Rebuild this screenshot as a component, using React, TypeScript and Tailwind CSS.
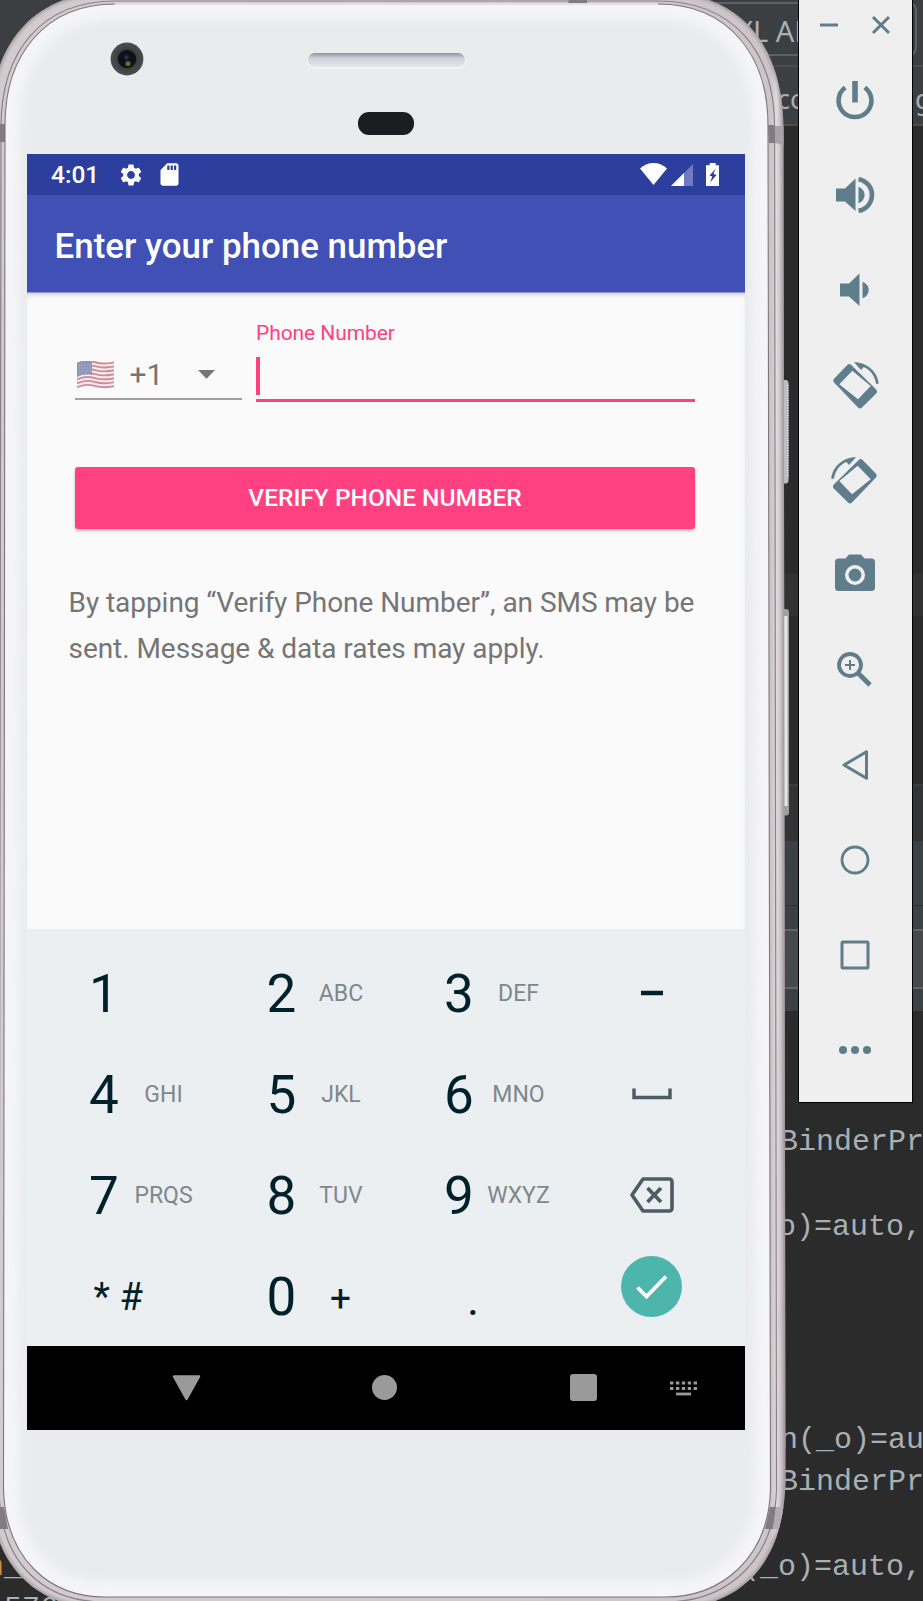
import type { ReactNode } from "react";
import { MdSdCard, MdSettings } from "react-icons/md";

function Editor() {
  return (
    <div className="flex h-[1601px] flex-col overflow-hidden bg-[#2b2b2b] font-['Liberation_Mono',monospace] text-[30px] leading-[42.5px] whitespace-pre text-[#a9b0b4]">
      <div className="flex h-[65px] shrink-0 bg-[#3c3f41] py-[2px] pl-[300px]">
        <div className="h-[54px] w-[617px] rounded-lg border-2 border-[#5e6162] pl-[434px] font-['Noto_Sans',sans-serif] text-[29px] leading-[54px]">
          XL API
        </div>
      </div>
      <div className="flex h-[61px] shrink-0 justify-between border-y-2 border-[#4b4d4f] bg-[#3c3f41] pl-[777px] font-['Noto_Sans',sans-serif] text-[27px] leading-[63px]">
        <span>co</span>
        <span className="w-[8px]">g</span>
      </div>
      <div className="h-[448px] shrink-0" />
      <div className="h-[42px] shrink-0 bg-[#323232]" />
      <div className="h-[168px] shrink-0" />
      <div className="h-[59px] shrink-0 border-y-2 border-t-[#3a3b3c] border-b-[#3d3f41] bg-[#313335]" />
      <div className="h-[63px] shrink-0 border-b border-[#2e3133] bg-[#3b4045]" />
      <div className="h-[23px] shrink-0 bg-[#3b4045]" />
      <div className="h-[60px] shrink-0 border-y-2 border-[#646464] bg-[#45494a]" />
      <div className="h-[22px] shrink-0 bg-[#3b4045]" />
      <div className="h-[109.500px] shrink-0" />
      <div className="h-[85px] shrink-0 pl-[780px]">BinderPr</div>
      <div className="h-[213px] shrink-0 pl-[742px]">(_o)=auto,</div>
      <div className="h-[42px] shrink-0 pl-[780px]">n(_o)=au</div>
      <div className="h-[85px] shrink-0 pl-[780px]">BinderPr</div>
      <div className="flex h-[42px] shrink-0">
        <div className="-ml-[14px] w-[756px]">
          <span className="text-[#cc8f42]">n</span>_
        </div>
        <div>(_o)=auto,</div>
      </div>
      <div className="shrink-0 pl-[4px]">576(</div>
    </div>
  );
}

function Shell() {
  const outer =
    "M-10.5 130C-10.5 50 28 -8 113 -8H660C745 -8 783.5 50 783.5 130L785.5 1480C784 1568 738 1610 660 1610H114C36 1610 -10 1568 -11.5 1480Z";
  const inner =
    "M5 125C5 55 45 4 115 4H658C728 4 768 55 768 125L770.5 1490C768 1560 720 1597 665 1597H105C50 1597 6 1560 3.5 1490Z";
  return (
    <svg className="absolute inset-0" width="800" height="1601" viewBox="0 0 800 1601" fill="none">
      <defs>
        <linearGradient id="rim" x1="-10" x2="786" y1="0" y2="0" gradientUnits="userSpaceOnUse">
          <stop offset="0" stopColor="#a89fa3" />
          <stop offset="0.013" stopColor="#d3cccf" />
          <stop offset="0.3" stopColor="#d3cbce" />
          <stop offset="0.982" stopColor="#cdc5c8" />
          <stop offset="0.988" stopColor="#e2dbde" />
          <stop offset="1" stopColor="#b5acb0" />
        </linearGradient>
        <linearGradient id="mesh" x1="0" x2="0" y1="0" y2="1">
          <stop offset="0" stopColor="#8f929b" />
          <stop offset="0.35" stopColor="#cccfd5" />
          <stop offset="1" stopColor="#e7e8ec" />
        </linearGradient>
        <radialGradient id="lens">
          <stop offset="0" stopColor="#101114" />
          <stop offset="0.5" stopColor="#17181b" />
          <stop offset="0.6" stopColor="#3d3f42" />
          <stop offset="1" stopColor="#4b4d50" />
        </radialGradient>
        <filter id="soft" x="-5%" y="-5%" width="110%" height="110%">
          <feGaussianBlur stdDeviation="5" />
        </filter>
        <filter id="edge" x="-5%" y="-5%" width="110%" height="110%">
          <feGaussianBlur stdDeviation="1.5" />
        </filter>
        <clipPath id="face">
          <path d={inner} />
        </clipPath>
        <clipPath id="body">
          <path d={outer} />
        </clipPath>
      </defs>
      <rect x="779" y="380" width="9.5" height="103.5" rx="3" fill="#b9bfbf" />
      <path d="M788 385V478" stroke="#e4e8e8" strokeWidth="1.5" strokeDasharray="1 1.5" />
      <rect x="779" y="609" width="10" height="206.5" rx="3" fill="#9c9f9b" />
      <path d="M785.5 616V806" stroke="#e4e8e2" strokeWidth="4" />
      <path d={outer} fill="url(#rim)" />
      <g clipPath="url(#body)">
        <path d={outer} stroke="#8b8186" strokeWidth="4" strokeOpacity="0.6" filter="url(#edge)" />
        <path
          d="M1 127C1 52 41 1 115 1H658C734 1 774.5 52 774.5 127L776.5 1490C774 1564 724 1602 665 1602H105C44 1602 0 1564 -1 1490Z"
          stroke="#8b8287"
          strokeWidth="1.2"
        />
        <path d="M-2 124H5V142H-2Z" fill="#827b7f" />
        <path d="M768 125H775V143H769Z" fill="#827b7f" />
        <path d="M775 126H784V145L775 143Z" fill="#aaa2a6" />
        <path d="M568.5 0H587V3H568.5Z" fill="#827b7f" />
        <path d="M-2 1507H4L8 1529H-2Z" fill="#827b7f" />
        <path d="M770 1507H776L773 1529H765Z" fill="#827b7f" />
        <path d="M776 1507H786L781 1529H773Z" fill="#b3abaf" />
      </g>
      <path d={inner} fill="#eaebed" />
      <g clipPath="url(#face)">
        <path d={inner} stroke="#f5f5f7" strokeWidth="30" filter="url(#soft)" />
      </g>
      <path d={inner} stroke="#7c7579" strokeWidth="1.1" />
      <path d="M115 4H658" stroke="#e4e0e2" strokeWidth="2" />
      <circle cx="127" cy="59" r="16.4" fill="url(#lens)" />
      <circle cx="127" cy="59" r="9" fill="#101115" />
      <circle cx="126.5" cy="57.5" r="2.2" fill="#2c2b58" />
      <circle cx="128" cy="63.5" r="2.6" fill="#6b6728" />
      <rect x="307" y="54" width="159" height="15" rx="7.5" fill="#f3f3f5" />
      <rect x="308" y="53" width="157" height="14" rx="7" fill="url(#mesh)" />
      <rect x="358" y="112" width="56" height="23" rx="11" fill="#1c1d21" />
    </svg>
  );
}

function StatusBar() {
  return (
    <div className="flex h-[41px] items-center bg-[#2c3e9e] text-white">
      <span className="ml-[24px] w-[67px] pt-[2px] text-[24.500px] font-medium">4:01</span>
      <MdSettings size={26} />
      <MdSdCard className="ml-[12px]" size={27} />
      <svg className="mb-[2px] ml-auto" width="27" height="22" viewBox="0 0 27 22">
        <path d="M13.500 22L0 5.500C3.500 2 8.500 0 13.500 0S23.500 2 27 5.500Z" fill="currentColor" />
      </svg>
      <svg className="ml-[3.500px]" width="22" height="22" viewBox="0 0 22 22">
        <path d="M22 0V22H0Z" fill="#6f7abf" />
        <path d="M13 9V22H0Z" fill="currentColor" />
      </svg>
      <svg className="mr-[26px] ml-[13px]" width="13.500" height="23" viewBox="0 0 13.500 23">
        <path
          fillRule="evenodd"
          d="M3.700 0H9.700V2.300H13.500V23H0V2.300H3.700ZM9.500 6L3.500 12.500L6.300 13.500L4 19.500L10.500 12L7.500 11Z"
          fill="currentColor"
        />
      </svg>
    </div>
  );
}

function Flag() {
  const stripes = [0, 1, 2, 3, 4, 5, 6];
  return (
    <svg width="37" height="28" viewBox="0 0 37 28" fill="none">
      <path d="M0 2C9 -2 13 -1 19 1C26 3 31 2 37 1V26C29 28 25 27 19 25.500C12 24 7 25 0 27.500Z" fill="#f2eff1" />
      {stripes.map((i) => (
        <path
          key={i}
          transform={`translate(0 ${i * 3.95})`}
          d="M0 2.500C9 -1 13 0 19 1.500C26 3.500 31 2.500 37 1.500"
          stroke="#d58a95"
          strokeWidth="1.900"
        />
      ))}
      <path d="M0 2C6 -0.500 10 -0.500 15 0.500V14C10 13 5 13.500 0 16Z" fill="#9094b8" />
      <path
        d="M2 4H14M2 7H14M2 10H14M2 13H10"
        stroke="#b9bcd2"
        strokeWidth="1"
        strokeDasharray="1.200 1.500"
      />
    </svg>
  );
}

function Form() {
  return (
    <div className="flex h-[635.500px] flex-col bg-[#fafafa] pr-[50px] pl-[48px] shadow-[inset_0_4px_4px_-2px_rgba(0,0,0,0.16)]">
      <div className="flex h-[109px] gap-[14px]">
        <div className="mt-[53px] flex h-[53.500px] w-[167px] items-center border-b-2 border-[#a0a0a0] pt-[6px] pl-[1.500px] text-[#757575]">
          <Flag />
          <span className="ml-[16px] text-[30px]">+1</span>
          <svg className="ml-[35px]" width="17" height="9" viewBox="0 0 17 9">
            <path d="M0 0H17L8.500 8.700Z" fill="currentColor" />
          </svg>
        </div>
        <div className="flex flex-1 flex-col border-b-[3px] border-[#ff4081]">
          <span className="mt-[27px] h-[37px] text-[21px] leading-[26px] tracking-[-0.080px] text-[#ff4081]">Phone Number</span>
          <span className="h-[37.500px] w-[3.500px] bg-[#ff4081]" />
        </div>
      </div>
      <button className="mt-[65px] h-[62px] shrink-0 rounded-[3px] bg-[#ff4081] pt-px text-[24.500px] font-medium text-white shadow-[0_2px_3px_rgba(0,0,0,0.24)]">
        VERIFY PHONE NUMBER
      </button>
      <p className="mt-[50.500px] -ml-[6.500px] text-[28px] leading-[46.700px] tracking-[-0.050px] whitespace-nowrap text-[#757575]">
        By tapping “Verify Phone Number”, an SMS may be
        <br />
        sent. Message &amp; data rates may apply.
      </p>
    </div>
  );
}

function Key({ digit, letters }: { digit: string; letters: string }) {
  return (
    <div className="flex h-[101px] w-[177.500px] items-center">
      <span className="w-[59px] pt-[2px] text-center text-[53px] text-[#00212b]">{digit}</span>
      <span className="flex w-[60px] justify-center text-[23px] text-[#7d888d]">{letters}</span>
    </div>
  );
}

function Keypad() {
  return (
    <div className="h-[417.500px] bg-[#eceff1] pt-[14px] pl-[47.500px] leading-none text-[#00212b]">
      <div className="grid grid-cols-[177.500px_177.500px_177.500px_89px] items-center">
        <Key digit="1" letters="" />
        <Key digit="2" letters="ABC" />
        <Key digit="3" letters="DEF" />
        <svg className="justify-self-center" width="44" height="36" viewBox="0 0 44 36">
          <path d="M11 18H33" stroke="currentColor" strokeWidth="4.500" />
        </svg>
        <Key digit="4" letters="GHI" />
        <Key digit="5" letters="JKL" />
        <Key digit="6" letters="MNO" />
        <svg className="justify-self-center" width="44" height="36" viewBox="0 0 44 36" fill="none">
          <path d="M4 12.500V21.500H40V12.500" stroke="#4c5d66" strokeWidth="3.500" />
        </svg>
        <Key digit="7" letters="PRQS" />
        <Key digit="8" letters="TUV" />
        <Key digit="9" letters="WXYZ" />
        <svg className="justify-self-center" width="44" height="36" viewBox="0 0 44 36" fill="none" stroke="#4c5d66">
          <path d="M13 2H39Q42 2 42 5V31Q42 34 39 34H13L2 18Z" strokeWidth="3.600" strokeLinejoin="round" />
          <path d="M17.500 11L31 25M31 11L17.500 25" strokeWidth="3.800" />
        </svg>
        <div className="flex h-[101px] items-center pt-px pl-[19px] text-[38px]">
          <span className="w-[26px]">*</span>
          <span>#</span>
        </div>
        <div className="flex h-[101px] items-center pt-[3px]">
          <span className="w-[59px] text-center text-[53px]">0</span>
          <span className="w-[59px] pt-[2px] text-center text-[37px]">+</span>
        </div>
        <div className="pt-[5px] pl-[37.500px] text-[46px]">.</div>
        <svg className="mb-[20px] justify-self-center" width="61" height="61" viewBox="0 0 61 61" fill="none">
          <circle cx="30.500" cy="30.500" r="30.500" fill="#4db6ac" />
          <path d="M16.500 31.500L25.500 40.500L45 20.500" stroke="#fff" strokeWidth="3.800" />
        </svg>
      </div>
    </div>
  );
}

function NavBar() {
  return (
    <div className="flex h-[84px] items-center bg-black text-[#9a9a9a]">
      <svg className="ml-[145px]" width="29" height="26" viewBox="0 0 29 26">
        <path d="M2 1.500H27L14.500 24Z" fill="currentColor" stroke="currentColor" strokeWidth="2.500" strokeLinejoin="round" />
      </svg>
      <span className="mb-[2px] ml-[171px] size-[25px] rounded-full bg-[#9a9a9a]" />
      <span className="mb-px ml-[173px] size-[27px] rounded-[3px] bg-[#9a9a9a]" />
      <svg className="ml-[73px]" width="27" height="15" viewBox="0 0 27 15" stroke="currentColor">
        <path d="M0 2H27M0 7.500H27" strokeWidth="3.200" strokeDasharray="3.400 2.500" />
        <path d="M6 13H21" strokeWidth="2.800" />
      </svg>
    </div>
  );
}

function Phone() {
  return (
    <div className="absolute top-0 left-0 h-[1601px] w-[800px] overflow-hidden">
      <Shell />
      <div className="relative mt-[154px] ml-[27px] flex w-[718px] flex-col font-[Roboto,sans-serif]">
        <StatusBar />
        <h1 className="h-[98px] border-b border-[#8d96d2] bg-[#4150b5] pl-[27.500px] text-[34.900px] leading-[103px] font-medium text-white">
          Enter your phone number
        </h1>
        <Form />
        <Keypad />
        <NavBar />
      </div>
    </div>
  );
}

function Tool({ children }: { children: ReactNode }) {
  return (
    <button className="flex h-[95px] items-center justify-center">
      <svg width="48" height="48" viewBox="-24 -24 48 48" fill="none">
        {children}
      </svg>
    </button>
  );
}

function Rotate() {
  return (
    <g fill="currentColor">
      <path
        fillRule="evenodd"
        d="M-7.700 -20Q-5.700 -22 -3.700 -20L21.200 4.500Q23 6.500 21.200 8.500L7 22.500Q5 24.500 3 22.500L-20.700 -2.200Q-22.700 -4.300 -20.700 -6.400ZM-2.700 -14.300L-15.700 -0.700L3 14.200L15.700 1Z"
      />
      <path d="M-1 -22.700C13 -22.700 23 -12 23.700 -1.200H21C20 -9.500 14.500 -15.800 8.700 -18L6 -15Z" />
    </g>
  );
}

function Toolbar() {
  return (
    <div className="absolute top-0 left-[798px] flex h-[1103px] w-[115px] flex-col border-x border-b border-black bg-[#efefef] text-[#607d8b]">
      <div className="flex h-[52.500px] items-center gap-[32px] pb-[2px] pl-[20px]">
        <svg width="20" height="20" viewBox="0 0 20 20" stroke="currentColor" strokeWidth="3">
          <path d="M1 10H19" />
        </svg>
        <svg width="20" height="20" viewBox="0 0 20 20" stroke="currentColor" strokeWidth="3">
          <path d="M2 2L18 18M18 2L2 18" />
        </svg>
      </div>
      <div className="flex flex-col pr-[2px]">
        <Tool>
          <path d="M-9.800 -12.500A16.400 16.400 0 1 0 9.800 -12.500" stroke="currentColor" strokeWidth="4.600" />
          <path d="M0 -19V2.500" stroke="currentColor" strokeWidth="5.600" />
        </Tool>
        <Tool>
          <path d="M-19 -6.500H-10L0.500 -16.500V16L-10 6.500H-19Z" fill="currentColor" />
          <path d="M3.500 -8.300C8 -6.500 9.500 -3 9.500 0S8 6.500 3.500 8.300Z" fill="currentColor" />
          <path d="M3.500 -15.800A16 16 0 0 1 3.500 15.800" stroke="currentColor" strokeWidth="4.600" />
        </Tool>
        <Tool>
          <path d="M-15 -6.500H-6L4.500 -16.500V16L-6 6.500H-15Z" fill="currentColor" />
          <path d="M7.500 -8.300C12 -6.500 13.700 -3 13.700 0S12 6.500 7.500 8.300Z" fill="currentColor" />
        </Tool>
        <Tool>
          <Rotate />
        </Tool>
        <Tool>
          <g transform="scale(-1 1)">
            <Rotate />
          </g>
        </Tool>
        <Tool>
          <path
            d="M-16.500 -16.500H-9.500L-6 -20.500H6L9.500 -16.500H16.500Q20 -16.500 20 -13V12.500Q20 16 16.500 16H-16.500Q-20 16 -20 12.500V-13Q-20 -16.500 -16.500 -16.500Z"
            fill="currentColor"
          />
          <circle r="8.200" stroke="#efefef" strokeWidth="3.600" />
        </Tool>
        <Tool>
          <circle cx="-5" cy="-5" r="11" stroke="currentColor" strokeWidth="3.800" />
          <path d="M-10 -5H0M-5 -10V0" stroke="currentColor" strokeWidth="2" />
          <path d="M3.500 3.500L15 15" stroke="currentColor" strokeWidth="4.800" />
        </Tool>
        <Tool>
          <path d="M-11 0L11.500 -13.300V13.300Z" stroke="currentColor" strokeWidth="3" strokeLinejoin="round" />
        </Tool>
        <Tool>
          <circle r="13" stroke="currentColor" strokeWidth="2.800" />
        </Tool>
        <Tool>
          <rect x="-13" y="-13" width="26" height="26" rx="1" stroke="currentColor" strokeWidth="3" />
        </Tool>
        <Tool>
          <g fill="currentColor">
            <circle cx="-12" r="4" />
            <circle r="4" />
            <circle cx="12" r="4" />
          </g>
        </Tool>
      </div>
    </div>
  );
}

export default function App() {
  return (
    <div className="relative h-[1601px] w-[923px] overflow-hidden">
      <Editor />
      <Phone />
      <Toolbar />
    </div>
  );
}
